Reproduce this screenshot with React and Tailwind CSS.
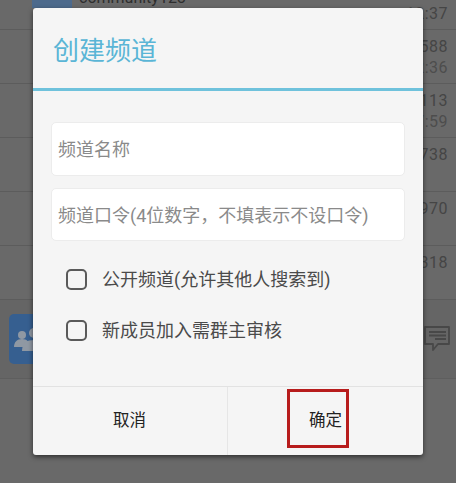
import React from "react";

const font = "font-['Roboto','Noto_Sans_CJK_SC',sans-serif]";

function Row({ top, bottom }) {
  return (
    <div className="h-[54px] border-b border-[#5c5c5c] pr-[8px] flex flex-col items-end pt-[6px] text-[16px] leading-[21px] text-[#454545] tracking-[0.5px]">
      <span>{top}</span>
      {bottom && <span className="text-[#4d4d4d]">{bottom}</span>}
    </div>
  );
}

function Check({ label }) {
  return (
    <label className="flex items-center gap-[15px] h-[21px] text-[18px] text-[#4a4a4a]">
      <span className="w-[21px] h-[21px] rounded-[5px] border-2 border-[#5a5a5a] bg-[#f5f5f5] shrink-0" />
      <span>{label}</span>
    </label>
  );
}

export default function App() {
  return (
    <div className={`${font} relative w-[456px] h-[483px] overflow-hidden bg-[#696969]`}>
      {/* dimmed list behind the dialog */}
      <div className="flex flex-col">
        <div className="h-[30px] border-b border-[#5c5c5c] flex flex-col relative">
          <div className="flex items-start h-[8px] overflow-hidden pl-[32px] gap-[7px]">
            <div className="w-[40px] h-[40px] bg-[#4d6a8c] shrink-0" />
            <span className="text-[16px] leading-[14px] text-[#2e2e2e] -mt-[9px]">community123</span>
          </div>
          <span className="absolute right-[8px] top-[3px] text-[16px] leading-[22px] text-[#454545] tracking-[0.5px]">12:37</span>
        </div>
        <Row top="1588" bottom="12:36" />
        <Row top="1113" bottom="17:59" />
        <Row top="1738" />
        <Row top="1970" />
        <Row top="1318" />
        <div className="h-[79px] border-b border-[#5e5e5e] bg-[#656565] flex items-center justify-between pl-[9px] pr-[5px]">
          <div className="w-[50px] h-[50px] rounded-[5px] bg-[#365f90] flex items-center pl-[4px] pt-[2px]">
            <svg width="36" height="26" viewBox="0 0 36 26" fill="#8f98a3">
              <circle cx="9" cy="8" r="4" />
              <path d="M1 20c0-5 3-8 8-8s8 3 8 8z" />
              <circle cx="21" cy="6" r="5" />
              <path d="M9 24c0-8 5-11 12-11s12 3 12 11z" />
            </svg>
          </div>
          <svg width="28" height="30" viewBox="0 0 28 30" fill="none" stroke="#484848" strokeWidth="1.8">
            <path d="M2 3h24v17H15l-5 6v-6H2z" strokeLinejoin="round" />
            <path d="M6 8h17M6 11.5h17M12 15h11" />
          </svg>
        </div>
      </div>

      {/* dialog */}
      <div className="absolute left-[33px] top-[8px] w-[390px] h-[447px] rounded-[3px] bg-[#f5f5f5] shadow-[0_2px_5px_rgba(0,0,0,0.55)] flex flex-col">
        <div className="h-[83px] border-b-[3px] border-[#6fc2dc] pl-[20px] pt-[25px] text-[26px] leading-[36px] text-[#5ab5d6] shrink-0">
          创建频道
        </div>
        <div className="px-[18px] pt-[31px] flex flex-col gap-[12px]">
          <div className="h-[54px] rounded-[5px] border border-[#ececec] bg-white flex items-center pl-[6px] pt-[1px] text-[18px] text-[#8a8a8a]">
            频道名称
          </div>
          <div className="h-[53px] rounded-[5px] border border-[#ececec] bg-white flex items-center pl-[6px] pt-[1px] text-[18px] text-[#8a8a8a]">
            频道口令(4位数字，不填表示不设口令)
          </div>
        </div>
        <div className="pl-[33px] pt-[28px] flex flex-col gap-[30px]">
          <Check label="公开频道(允许其他人搜索到)" />
          <Check label="新成员加入需群主审核" />
        </div>
        <div className="mt-auto h-[69px] border-t border-[#e2e2e2] flex text-[16.5px] text-[#222222]">
          <div className="w-[195px] border-r border-[#e6e6e6] flex items-center justify-center pr-[1px] pt-[1px]">取消</div>
          <div className="flex-1 flex items-center pl-[81px] pt-[1px]">确定</div>
        </div>
      </div>

      {/* red annotation box */}
      <div className="absolute left-[287px] top-[389px] w-[62px] h-[59px] border-[3px] border-[#b71c1c]" />
    </div>
  );
}
